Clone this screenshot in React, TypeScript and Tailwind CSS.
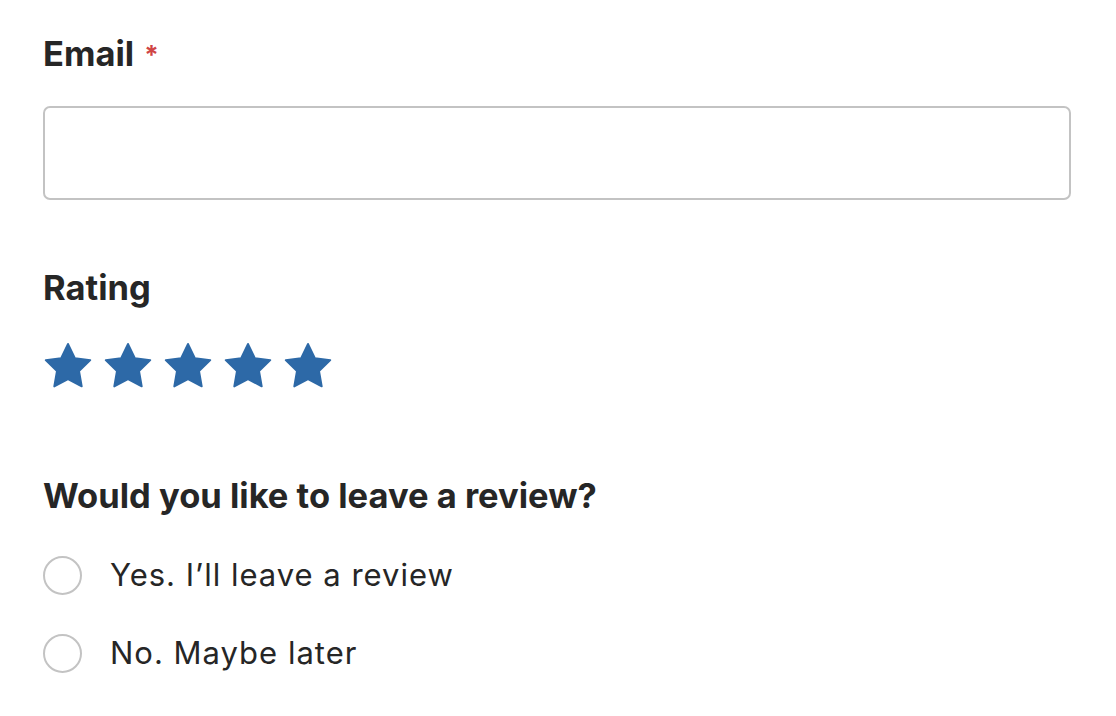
import React, { useState } from 'react';

const Star = () => (
  <svg width="50" height="48" viewBox="0 0 24 23" className="block">
    <path
      d="M12 0.9l3.3 6.8 7.4 1-5.4 5.2 1.3 7.4L12 17.8l-6.6 3.5 1.3-7.4L1.3 8.7l7.4-1z"
      fill="#2d69a7"
      stroke="#2d69a7"
      strokeWidth="0.9"
      strokeLinejoin="round"
    />
  </svg>
);

const App: React.FC = () => {
  const [choice, setChoice] = useState<string | null>(null);
  const options = ['Yes. I\u2019ll leave a review', 'No. Maybe later'];

  return (
    <div className="min-h-screen bg-white font-['Inter',sans-serif] text-[#262626] pl-[43px] pr-[45px] pt-[30px]">
      {/* Email */}
      <label className="flex items-start h-[48px] text-[34.5px] font-bold leading-[48px]">
        Email
        <span className="ml-[10px] mt-[1px] text-[26px] text-[#d04545]">*</span>
      </label>
      <input
        type="email"
        className="mt-[28px] block w-full h-[94px] rounded-[7px] border-2 border-[#c3c3c3] outline-none"
      />

      {/* Rating */}
      <div className="mt-[64px] text-[34.5px] font-bold leading-[48px]">Rating</div>
      <div className="mt-[30px] flex gap-[10px]">
        {[0, 1, 2, 3, 4].map(i => (
          <Star key={i} />
        ))}
      </div>

      {/* Review */}
      <div className="mt-[82px] text-[34.5px] font-bold leading-[48px]">
        Would you like to leave a review?
      </div>
      <div className="mt-[35px] flex flex-col gap-[38px]">
        {options.map(opt => (
          <label key={opt} className="flex items-center gap-[28px] cursor-pointer">
            <span
              onClick={() => setChoice(opt)}
              className="w-[39px] h-[39px] rounded-full border-2 border-[#c3c3c3] flex items-center justify-center shrink-0"
            >
              {choice === opt && <span className="w-[19px] h-[19px] rounded-full bg-[#2d69a7]" />}
            </span>
            <span className="text-[31px] leading-[40px] tracking-[1px]">{opt}</span>
          </label>
        ))}
      </div>
    </div>
  );
};

export default App;
